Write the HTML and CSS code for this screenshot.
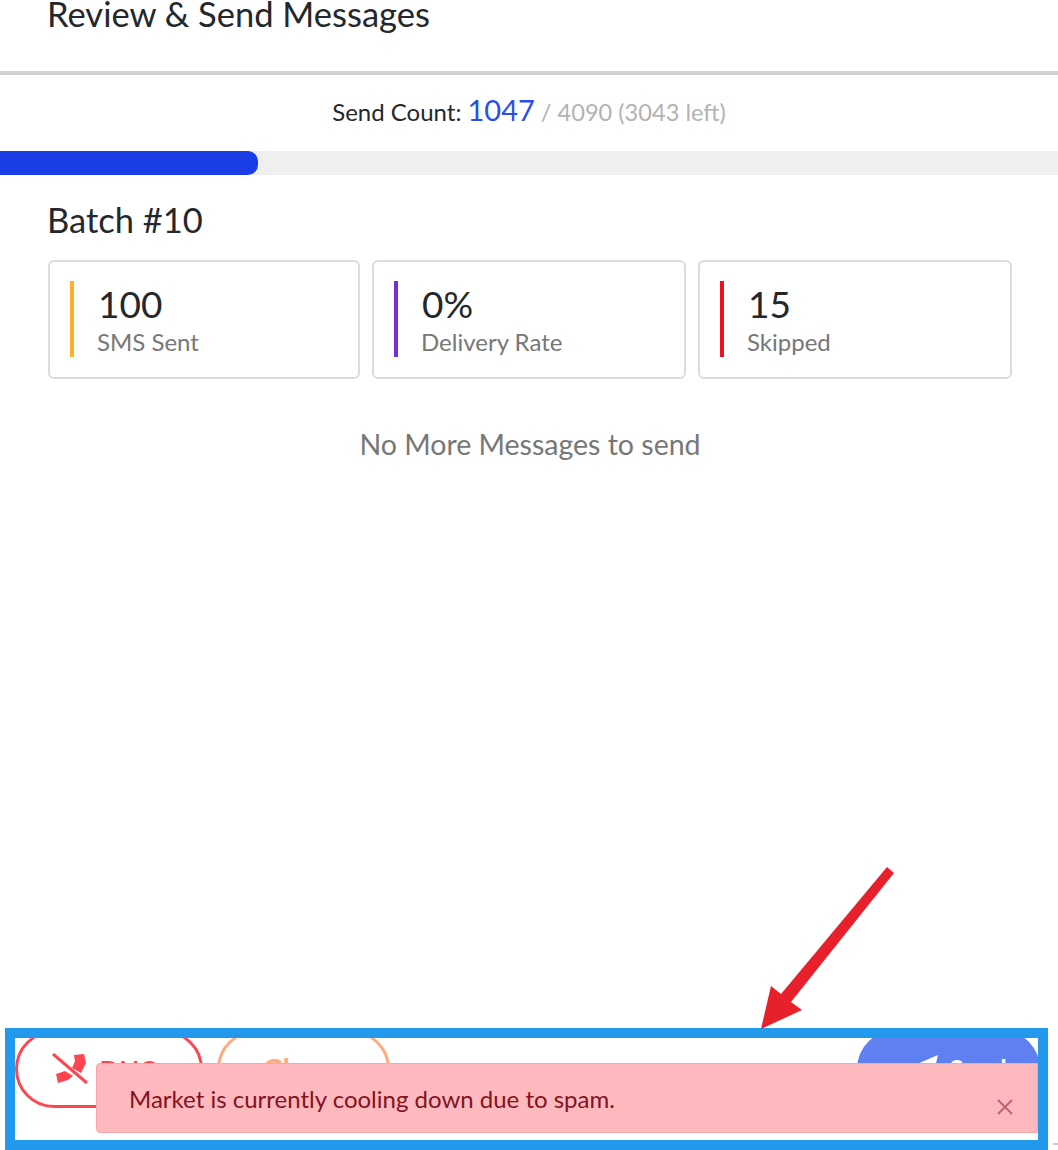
FILE: index.html
```html
<!DOCTYPE html>
<html lang="en">
<head>
<meta charset="utf-8">
<title>Review &amp; Send Messages</title>
<link rel="stylesheet" href="styles.css">
</head>
<body>
<div class="page">
  <header class="header"><h1 class="title">Review &amp; Send Messages</h1></header>
  <p class="count"><span class="count-label">Send Count:</span> <span class="count-value">1047</span> <span class="count-rest">/ 4090 (3043 left)</span></p>
  <div class="track"><div class="fill" style="width:258px"></div></div>
  <main class="batch">
    <h2 class="batch-title">Batch #10</h2>
    <div class="stats">
      <div class="card"><span class="bar bar-yellow"></span><div><div class="num">100</div><div class="lbl">SMS Sent</div></div></div>
      <div class="card"><span class="bar bar-purple"></span><div><div class="num">0%</div><div class="lbl">Delivery Rate</div></div></div>
      <div class="card"><span class="bar bar-red"></span><div><div class="num">15</div><div class="lbl">Skipped</div></div></div>
    </div>
    <p class="empty">No More Messages to send</p>
  </main>
  <footer class="actions">
    <div class="left-actions">
      <button class="btn btn-dnc">
        <svg class="btn-icon" viewBox="0 0 36 32" aria-hidden="true"><path d="M22 2L32 1L34 10L29 20L20 15L23 8ZM4 21L13 18L21 23L16 27L6 30Z" fill="#ff4650"/><path d="M1 1L35 30" stroke="#ff4650" stroke-width="3" fill="none"/></svg>
        DNC
      </button>
      <button class="btn btn-clear">Clear</button>
    </div>
    <button class="btn btn-send">
      <svg class="send-icon" viewBox="0 0 28 28" aria-hidden="true"><path d="M28 0L0 12L8 17L10 27L15 21L22 25Z" fill="#fff"/></svg>
      Send
    </button>
  </footer>
  <div class="alert"><span>Market is currently cooling down due to spam.</span>
    <svg class="close" viewBox="0 0 16 16" aria-hidden="true"><path d="M1 1l14 14M15 1L1 15" stroke="#c0636c" stroke-width="2" fill="none"/></svg>
  </div>
  <div class="frame"></div>
  <svg class="arrow" viewBox="0 0 1058 1150" aria-hidden="true">
    <path d="M887 867L894 873L791 1002L802 1010L761 1029L771 986L781 994Z" fill="#e6212b"/>
    <path d="M1053 1144h5" stroke="#999" stroke-width="1"/>
  </svg>
</div>
</body>
</html>
```

FILE: styles.css
```css
* { box-sizing: border-box; }
html, body { margin: 0; padding: 0; background: #fff; }
body { font-family: Lato, "Open Sans", sans-serif; color: #24272b; }
.page { position: relative; width: 1058px; height: 1150px; overflow: hidden; display: flex; flex-direction: column; }
.header { height: 75px; padding-left: 48px; border-bottom: 4px solid #d2d2d2; }
.title { margin: 0 0 0 -1px; font-size: 34.5px; line-height: 28px; font-weight: 400; }
.count { margin: 18px 0 0; height: 58px; text-align: center; font-size: 23.6px; line-height: 33px; white-space: nowrap; }
.count-label { font-size: 24px; }
.count-value { color: #2a4fe8; font-size: 29px; }
.count-rest { color: #b3b3b3; }
.track { height: 24px; background: #efefef; }
.fill { height: 100%; background: #1b3de6; border-radius: 0 10px 10px 0; }
.batch { padding: 0 46px 0 48px; }
.batch-title { margin: 25px 0 20px -1px; font-size: 34.5px; line-height: 40px; font-weight: 400; }
.stats { display: grid; grid-template-columns: 312px 314px 314px; gap: 12px; }
.card { height: 119px; border: 2px solid #dcdcdc; border-radius: 6px; padding: 19px 20px; display: flex; gap: 24px; }
.bar { width: 4px; height: 76px; flex: none; }
.bar-yellow { background: #fcb12f; }
.bar-purple { background: #7a2fd6; }
.bar-red { background: #ee1122; }
.num { font-size: 37px; line-height: 46px; }
.lbl { font-size: 24px; line-height: 30px; color: #777; margin-left: -1px; }
.empty { margin: 45px 0 0; text-align: center; font-size: 28.5px; line-height: 40px; color: #777; }
.actions { margin-top: auto; height: 120px; padding: 0 18px 0 15px; display: flex; justify-content: space-between; align-items: flex-start; }
.left-actions { display: flex; gap: 14px; }
.btn { height: 78px; border-radius: 39px; background: #fff; font: 700 26px Lato, sans-serif; display: flex; align-items: center; justify-content: center; gap: 11px; padding: 0; }
.btn-dnc { width: 188px; border: 3px solid #ff4650; color: #ff4650; padding: 2px 9px 0 0; }
.btn-clear { width: 173px; border: 3px solid #ffaa7c; color: #ffaa7c; font-size: 30px; padding-right: 12px; }
.btn-send { width: 183px; border: 0; background: #5f80f0; color: #fff; padding-left: 20px; }
.btn-icon { width: 36px; height: 32px; margin-top: -2px; }
.send-icon { width: 28px; height: 28px; }
.alert { position: absolute; left: 96px; top: 1063px; width: 942px; height: 70px; padding: 0 0 0 32px; background: #feb9be; border: 1px solid #fba5ab; border-radius: 4px 0 0 4px; color: #841220; font-size: 24px; line-height: 70px; }
.close { position: absolute; left: 900px; top: 35px; width: 16px; height: 16px; }
.frame { position: absolute; left: 5px; top: 1028px; width: 1043px; height: 122px; border: 10px solid #2299ea; }
.arrow { position: absolute; inset: 0; width: 1058px; height: 1150px; pointer-events: none; }
```
